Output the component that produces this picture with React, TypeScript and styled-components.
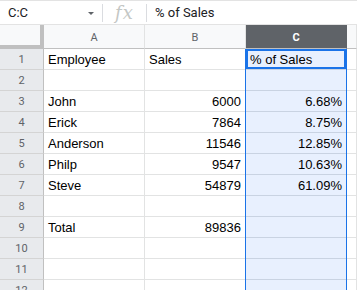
import styled, { createGlobalStyle, css } from "styled-components";

const GlobalStyle = createGlobalStyle`
  html, body {
    margin: 0;
    padding: 0;
    background: #fff;
  }
`;

const columns = ["A", "B", "C"];

const rows: { a?: string; b?: string; c?: string }[] = [
  { a: "Employee", b: "Sales", c: "% of Sales" },
  {},
  { a: "John", b: "6000", c: "6.68%" },
  { a: "Erick", b: "7864", c: "8.75%" },
  { a: "Anderson", b: "11546", c: "12.85%" },
  { a: "Philp", b: "9547", c: "10.63%" },
  { a: "Steve", b: "54879", c: "61.09%" },
  {},
  { a: "Total", b: "89836" },
  {},
  {},
  {},
];

const isNumber = (v?: string) => !!v && /^[\d.]+%?$/.test(v);

export default function App() {
  return (
    <Sheet>
      <GlobalStyle />
      <FormulaBar>
        <NameBox>
          <span>C:C</span>
          <Caret />
        </NameBox>
        <Divider />
        <FxLabel>fx</FxLabel>
        <Divider />
        <FormulaText>% of Sales</FormulaText>
      </FormulaBar>
      <Grid>
        <Corner />
        {columns.map((col) => (
          <ColHeader key={col} $selected={col === "C"}>
            {col}
          </ColHeader>
        ))}
        <ColHeader $selected={false} />
        {rows.map((row, i) => (
          <RowGroup key={i}>
            <RowHeader>{i + 1}</RowHeader>
            <Cell $right={isNumber(row.a)}>{row.a}</Cell>
            <Cell $right={isNumber(row.b)}>{row.b}</Cell>
            <Cell $right={isNumber(row.c)} $selected $active={i === 0}>
              {row.c}
            </Cell>
            <Cell />
          </RowGroup>
        ))}
        <ColumnSelection />
      </Grid>
    </Sheet>
  );
}

const Sheet = styled.div`
  width: 357px;
  height: 290px;
  overflow: hidden;
  background: #fff;
  font-family: "Liberation Sans", Arial, sans-serif;
`;

const FormulaBar = styled.div`
  display: flex;
  align-items: center;
  height: 25px;
  box-sizing: border-box;
  border-top: 1px solid #e3e3e3;
  border-bottom: 1px solid #e3e3e3;
  font-size: 13px;
  color: #202124;
`;

const NameBox = styled.div`
  display: flex;
  align-items: center;
  justify-content: space-between;
  width: 102px;
  box-sizing: border-box;
  padding: 0 8px 0 8px;
  & span {
    font-family: Roboto, "Liberation Sans", sans-serif;
    font-size: 13px;
  }
`;

const Caret = styled.div`
  width: 0;
  height: 0;
  border-left: 3.5px solid transparent;
  border-right: 3.5px solid transparent;
  border-top: 3.5px solid #5f6368;
  margin-top: 1px;
`;

const Divider = styled.div`
  width: 1px;
  height: 18px;
  background: #dadce0;
`;

const FxLabel = styled.div`
  width: 43px;
  text-align: center;
  font-family: "DejaVu Serif", "Liberation Serif", serif;
  font-style: italic;
  font-size: 18px;
  color: #c4c7c5;
  line-height: 1;
  letter-spacing: 1px;
`;

const FormulaText = styled.div`
  padding-left: 8px;
  font-family: Roboto, "Liberation Sans", sans-serif;
  font-size: 13px;
`;

const Grid = styled.div`
  position: relative;
  display: grid;
  grid-template-columns: 44px 101px 101px 101px 1fr;
  grid-auto-rows: 21px;
  grid-template-rows: 24px;
`;

const RowGroup = styled.div`
  display: contents;
`;

const Corner = styled.div`
  background: #f8f9fa;
  border-right: 4px solid #c0c0c0;
  border-bottom: 4px solid #c0c0c0;
  box-sizing: border-box;
`;

const ColHeader = styled.div<{ $selected: boolean }>`
  display: flex;
  align-items: center;
  justify-content: center;
  box-sizing: border-box;
  border-right: 1px solid #e2e3e3;
  border-bottom: 1px solid #c0c0c0;
  background: #f8f9fa;
  color: #5f6368;
  font-family: Roboto, "Liberation Sans", sans-serif;
  font-size: 11px;
  padding-top: 1px;
  ${(p) =>
    p.$selected &&
    css`
      background: #5f6368;
      color: #fff;
      font-weight: 700;
      border-right-color: #5f6368;
    `}
`;

const RowHeader = styled.div`
  display: flex;
  align-items: center;
  justify-content: center;
  box-sizing: border-box;
  border-right: 1px solid #c0c0c0;
  border-bottom: 1px solid #d4d4d4;
  background: #e8eaed;
  color: #5f6368;
  font-family: Roboto, "Liberation Sans", sans-serif;
  font-size: 11px;
`;

const Cell = styled.div<{ $right?: boolean; $selected?: boolean; $active?: boolean }>`
  display: flex;
  align-items: flex-end;
  justify-content: ${(p) => (p.$right ? "flex-end" : "flex-start")};
  box-sizing: border-box;
  padding: 0 4px 2px 4px;
  border-right: 1px solid #e2e3e3;
  border-bottom: 1px solid #e2e3e3;
  font-size: 13px;
  color: #000;
  white-space: nowrap;
  overflow: hidden;
  ${(p) =>
    p.$selected &&
    css`
      background: #e8f0fe;
      border-bottom-color: #c9d3e2;
    `}
  ${(p) =>
    p.$active &&
    css`
      box-shadow: inset 0 0 0 2px #1a73e8;
    `}
`;

const ColumnSelection = styled.div`
  position: absolute;
  top: 24px;
  bottom: 0;
  left: 245px;
  width: 102px;
  border-left: 1px solid #1a73e8;
  border-right: 1px solid #1a73e8;
  box-sizing: border-box;
  pointer-events: none;
`;
